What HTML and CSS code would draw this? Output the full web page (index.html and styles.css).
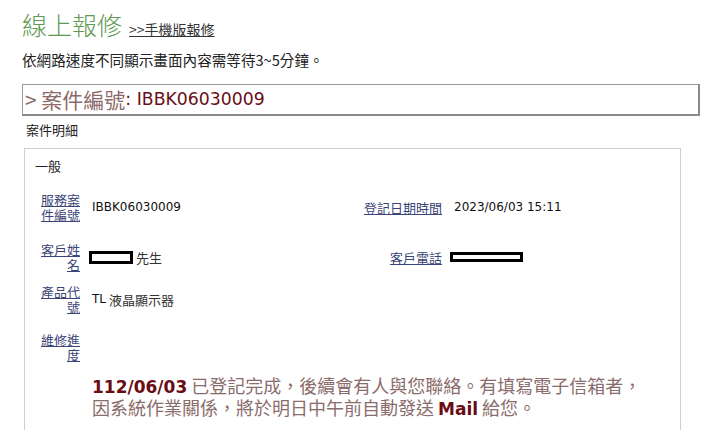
FILE: index.html
```html
<!DOCTYPE html>
<html lang="zh-Hant">
<head>
<meta charset="utf-8">
<title>線上報修</title>
<link rel="stylesheet" href="styles.css">
</head>
<body>
<div class="page">
  <div class="head">
    <h1 class="title">線上報修</h1>
    <a class="mobile-link" href="#">&gt;&gt;手機版報修</a>
  </div>
  <p class="notice">依網路速度不同顯示畫面內容需等待3~5分鐘。</p>
  <div class="case-box">
    <span class="case-label">&gt; 案件編號</span><span class="case-id">: IBBK06030009</span>
  </div>
  <div class="section-name">案件明細</div>
  <div class="panel">
    <div class="group-name">一般</div>
    <div class="grid">
      <a class="label" href="#">服務案<br>件編號</a>
      <div class="value">IBBK06030009</div>
      <a class="label" href="#">登記日期時間</a>
      <div class="value">2023/06/03 15:11</div>

      <a class="label" href="#">客戶姓<br>名</a>
      <div class="value"><span class="redact redact-name"></span><span class="cjk">先生</span></div>
      <a class="label" href="#">客戶電話</a>
      <div class="value"><span class="redact redact-phone"></span></div>

      <a class="label" href="#">產品代<br>號</a>
      <div class="value">TL <span class="cjk">液晶顯示器</span></div>
      <div></div>
      <div></div>

      <a class="label" href="#">維修進<br>度</a>
      <div class="value"></div>
      <div></div>
      <div></div>
    </div>
    <div class="message">
      <b class="msg-date">112/06/03</b> 已登記完成，後續會有人與您聯絡。有填寫電子信箱者，<br>因系統作業關係，將於明日中午前自動發送 <b class="msg-mail">Mail</b> 給您。
    </div>
  </div>
</div>
</body>
</html>
```
FILE: styles.css
```css
html, body {
  margin: 0;
  padding: 0;
  background: #fff;
}
body {
  font-family: "Noto Sans CJK TC", "DejaVu Sans", sans-serif;
  color: #222;
}
.page {
  padding: 6px 22px 0 22px;
}
.head {
  display: flex;
  align-items: baseline;
  gap: 7px;
  height: 36px;
}
.title {
  margin: 0;
  font-size: 25px;
  font-weight: 300;
  color: #5f9a52;
  line-height: 36px;
}
.mobile-link {
  font-size: 14px;
  color: #333;
  text-decoration: underline;
}
.notice {
  margin: 8px 0 0 0;
  font-size: 14.6px;
  line-height: 20px;
  color: #222;
}
.case-box {
  margin-top: 14px;
  height: 29px;
  width: 673px;
  border: 1px solid #9a9a9a;
  border-right: 2px solid #8a8a8a;
  border-bottom: 2px solid #8a8a8a;
  display: flex;
  align-items: center;
  padding-left: 2px;
  font-size: 21px;
  line-height: 29px;
}
.case-label {
  color: #8c6a6a;
}
.case-id {
  font-family: "DejaVu Sans", sans-serif;
  font-size: 17.3px;
  color: #6a0f18;
}
.section-name {
  margin: 6px 0 0 4px;
  font-size: 13px;
  line-height: 16px;
  color: #222;
}
.panel {
  margin: 10px 0 0 2px;
  width: 645px;
  height: 290px;
  border: 1px solid #cfcfcf;
  padding: 9px 0 0 10px;
}
.group-name {
  font-size: 13px;
  line-height: 16px;
  color: #222;
}
.grid {
  margin-top: 18px;
  display: grid;
  grid-template-columns: 45px 258px 80px 1fr;
  grid-template-rows: 50px 42px 48px 30px;
  column-gap: 12px;
}
.label {
  text-align: right;
  font-size: 13px;
  line-height: 15px;
  color: #3b4577;
  text-decoration: underline;
  align-self: start;
  height: 30px;
  display: flex;
  align-items: center;
  justify-content: flex-end;
}
.value {
  font-family: "DejaVu Sans", "Noto Sans CJK TC", sans-serif;
  font-size: 12px;
  color: #111;
  display: flex;
  align-items: center;
  align-self: start;
  height: 30px;
}
.cjk {
  font-family: "Noto Sans CJK TC", sans-serif;
  font-size: 13px;
  color: #333;
}
.value .cjk {
  margin-left: 3px;
}
.redact {
  display: inline-block;
  box-sizing: border-box;
  border: 3px solid #000;
  background: #fff;
}
.redact-name {
  width: 44px;
  height: 13px;
  margin-left: -3px;
}
.redact-phone {
  width: 73px;
  height: 10px;
  margin-left: -4px;
}
.message {
  margin: 13px 0 0 57px;
  font-size: 18px;
  line-height: 20px;
  color: #8a6c6c;
}
.msg-date, .msg-mail {
  font-family: "DejaVu Sans", sans-serif;
  font-weight: bold;
  font-size: 17px;
  color: #6a0c14;
}
```
